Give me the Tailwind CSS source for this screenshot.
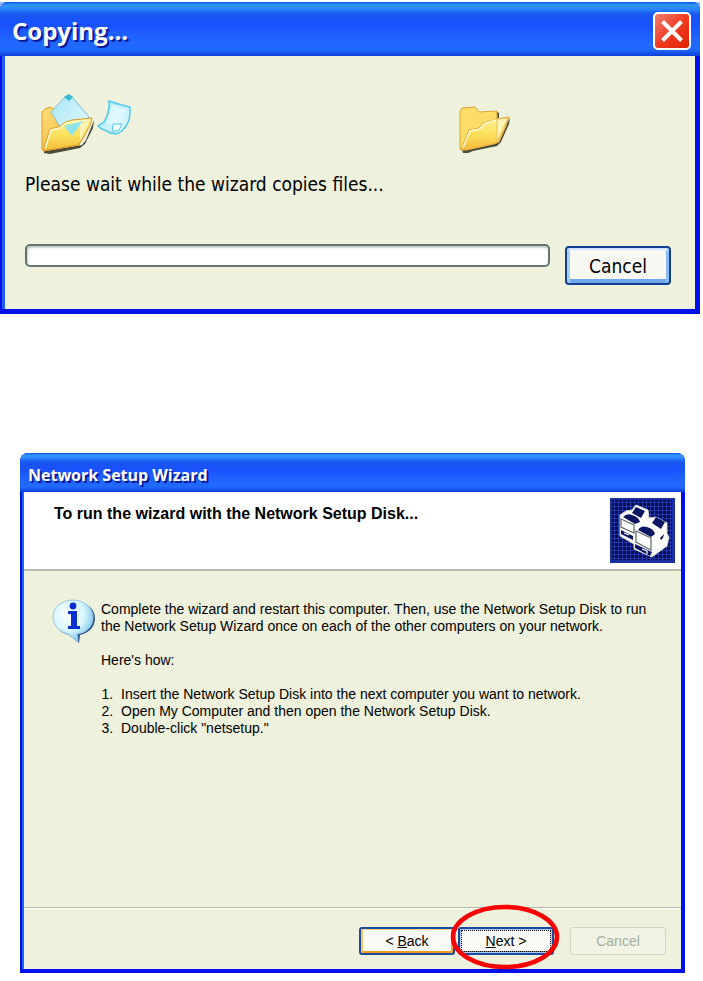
<!DOCTYPE html>
<html lang="en">
<head>
  <meta charset="UTF-8" />
  <title>Network Setup Wizard</title>
  <script src="https://cdn.jsdelivr.net/npm/@tailwindcss/browser@4"></script>
</head>
<body class="bg-white text-black min-h-screen pt-[2px]">

  <!-- Copying dialog -->
  <div class="bg-[#8fb6f2] mr-[3px]">
    <section class="rounded-t-lg bg-[#0010e8] border-b-[5px] border-[#0010e8] font-['DejaVu_Sans_Condensed','DejaVu_Sans',sans-serif]">
      <header class="h-[54px] rounded-t-lg flex items-center justify-between pl-3 pr-[9px] pt-1 bg-[linear-gradient(180deg,#0a4fe0_0px,#2f97ff_3px,#2a86fc_7px,#1757ee_12px,#1b50ff_22px,#2068ff_40px,#2068ff_48px,#0d3fd8_54px)]">
        <h1 class="text-white text-[24px] leading-7 font-bold font-['Open_Sans',sans-serif] [text-shadow:2px_2px_0_#0a1a9c]">Copying...</h1>
        <button type="button" aria-label="Close" class="size-[38px] rounded-[5px] border-2 border-white bg-linear-to-br from-[#f07a6c] via-[#f03a20] to-[#e02000] flex items-center justify-center">
          <svg class="size-[22px]" viewBox="0 0 22 22" fill="none" stroke="#fff" stroke-width="4"><path d="M1.5 1.5l19 19M20.5 1.5l-19 19" /></svg>
        </button>
      </header>

      <div class="mx-[5px] bg-[#eef1db] pl-5 pr-6 pt-9 pb-6 shadow-[-3px_0_0_#2060ff]">
        <div class="flex items-start pl-4 pr-[160px]">
          <svg class="w-[54px] h-[62px]" viewBox="0 0 54 62">
            <defs>
              <linearGradient id="back" x1="0" y1="0" x2="1" y2="1">
                <stop offset="0" stop-color="#fde07a" /><stop offset="1" stop-color="#eda92c" />
              </linearGradient>
              <linearGradient id="front" x1="0" y1="0" x2="0" y2="1">
                <stop offset="0" stop-color="#fff09c" /><stop offset=".5" stop-color="#fde25e" /><stop offset="1" stop-color="#f4b93a" />
              </linearGradient>
              <linearGradient id="sheet" x1="0" y1="0" x2="1" y2="1">
                <stop offset="0" stop-color="#a8e6f7" /><stop offset="1" stop-color="#e4fafe" />
              </linearGradient>
            </defs>
            <path d="M3 59l38-6 4-5 8-20-1 8-8 16-5 4-30 6-6-1z" fill="#4c4a3a" />
            <path d="M1 57V20l3-3 5-2 5 3 32 10-8 25-35 6z" fill="url(#back)" stroke="#e59a26" />
            <path d="M10 20L24 5l4-2 4 3 16 19-14 18-14-7z" fill="url(#sheet)" stroke="#7fb9de" />
            <path d="M23 5l5-3 4 3-4 4z" fill="#35bcd2" />
            <path d="M2 59l7-22 9-2 6-5 7-2 20-2-2 7-8 15-4 5z" fill="url(#front)" stroke="#d99a2a" />
            <path d="M4 57l6-19 9-2 6-5 24-3" fill="none" stroke="#fff8d0" stroke-width="1.5" />
            <path d="M23 34l19-5-11 15z" fill="#8de3ec" />
            <path d="M39 32v17l9-20z" fill="#fff6c8" opacity=".8" />
          </svg>
          <svg class="w-9 h-[39px] mt-1 ml-[2px]" viewBox="0 0 36 39">
            <path d="M12 5l6 2 7 2 8 2v6l-1 7-3 6-4 5-6 3-6-1-3-2-5-2-4-3 6-4 3-6 2-8z" fill="url(#sheet)" stroke="#4fc8ea" stroke-width="1.5" />
            <path d="M15 9l14 5-4 13-8 3-7-3z" fill="#dcf7fe" />
            <path d="M15 36l1-8 9 0-3 6z" fill="#f2fdff" stroke="#4fc8ea" />
          </svg>
          <svg class="w-[52px] h-[50px] mt-[13px] ml-auto" viewBox="0 0 52 50">
            <path d="M3 45l34-9 14-23-1 6-8 18-4 4-24 5-5 2H4z" fill="#4c4a3a" />
            <path d="M37 6l3 2v5h-4z" fill="#4c4a3a" />
            <path d="M1 44V6l2-3 13-1 4 5 18-1v20L4 45z" fill="#fcdd68" stroke="#d9a535" />
            <path d="M2 45l8-20 10-2 4-5 14-4 12-2-3 9-7 16-5 2-27 6z" fill="url(#front)" stroke="#dba83a" />
            <path d="M4 43l7-17 10-2 4-5 12-4" fill="none" stroke="#fff8d0" stroke-width="1.5" />
            <path d="M38 14v23l11-24z" fill="#fff3b6" stroke="#e5c05a" />
          </svg>
        </div>

        <p id="copy-text" class="mt-[17px] text-[19px] leading-6">Please wait while the wizard copies files...</p>

        <div class="mt-[48px] flex items-start gap-[15px]">
          <div role="progressbar" aria-labelledby="copy-text" aria-valuenow="0" class="grow h-[23px] rounded-[5px] border-2 border-[#66736f] bg-white shadow-[inset_1px_2px_2px_#c4cbc8]"></div>
          <button type="button" class="mt-[2px] w-[106px] h-[39px] rounded-[4px] border-2 border-[#123f94] bg-[#f8f8f2] text-[19px] leading-6 shadow-[inset_0_2px_0_#cfe2ff,inset_3px_0_0_#a9ccf8,inset_-3px_0_0_#8bbcf5,inset_0_-4px_0_#6fa8f0]">Cancel</button>
        </div>
      </div>
    </section>
  </div>

  <!-- Network Setup Wizard dialog -->
  <section class="mt-[139px] ml-5 mr-[18px] rounded-t-lg bg-[#0010e8] border-b-[4px] border-[#0010e8] font-['Liberation_Sans',Arial,sans-serif]">
    <header class="h-[39px] rounded-t-lg flex items-center pl-2 pt-1 bg-[linear-gradient(180deg,#0a4fe0_0px,#2f97ff_2px,#2a86fc_5px,#1757ee_9px,#1b50ff_16px,#2068ff_29px,#2068ff_34px,#0d3fd8_39px)]">
      <h1 class="text-white text-[16px] leading-6 font-bold font-['Open_Sans',sans-serif] [text-shadow:2px_2px_0_#0a1a9c]">Network Setup Wizard</h1>
    </header>

    <div class="mx-[4px] bg-[#eef1db] shadow-[-2px_0_0_#2060ff]">
      <div class="h-[79px] bg-white border-b-2 border-[#b9beaf] flex items-start justify-between pl-[30px] pr-[6px] pt-[6px]">
        <h2 class="mt-[6px] text-[16px] leading-[20px] font-bold">To run the wizard with the Network Setup Disk...</h2>
        <svg class="size-[65px]" viewBox="0 0 65 65">
          <defs>
            <pattern id="dots" width="4" height="4" patternUnits="userSpaceOnUse">
              <rect width="4" height="4" fill="#2038b4" /><rect width="3" height="3" x="1" y="1" fill="#080d3c" />
            </pattern>
          </defs>
          <rect width="65" height="65" fill="#1a2f9e" />
          <rect width="60" height="60" x="2" y="2" fill="url(#dots)" />
          <path d="M10 17l6-4 6-1 4-5 12 5 1 8 7-1 11 6v11l2 3-2 9-15 11-18-8v-5l-14-8z" fill="#fff" stroke="#d5d9d4" stroke-linejoin="round" />
          <g fill="#0c1562">
            <path d="M22 15l4-6 9 4-4 7zM42 25l4-6 9 5-4 7z" />
            <path d="M13 19q4-4 9-2 7 2 8 7l-5 2zM28 32q3-5 9-3 7 2 8 7l-4 3z" />
            <path d="M11 32l12 6v4l-12-6zM25 46l17 8-2 4-15-8z" />
            <path d="M50 40l4-4-1 4-2 2z" />
          </g>
          <g fill="none" stroke="#6a7070" stroke-width="1.3">
            <path d="M11 21l13 6v8l-13-6zM26 33l15 7v12l-15-8z" />
          </g>
          <g fill="none" stroke="#fff" stroke-width="1.2">
            <path d="M14 35l5 2M32 51l5 2v3" />
          </g>
        </svg>
      </div>

      <div class="h-[337px] flex items-start pl-7 pr-4 pt-[28px] border-b border-[#b3b9a2]">
        <svg class="w-[44px] h-[45px] shrink-0" viewBox="0 0 44 45">
          <defs>
            <radialGradient id="bubble" cx=".4" cy=".35" r=".7">
              <stop offset="0" stop-color="#fff" /><stop offset=".55" stop-color="#d6f6fe" /><stop offset="1" stop-color="#6cbdea" />
            </radialGradient>
          </defs>
          <path d="M22 2C10 2 3 9 3 19s6 15 14 17l10 8 1-8c9-2 15-8 15-17S34 2 22 2z" fill="#28508e" />
          <path d="M21 1C9 1 1 9 1 18s7 15 15 17l10 8-1-8c10-1 16-8 16-17S32 1 21 1z" fill="url(#bubble)" stroke="#9bc8e4" />
          <circle cx="21" cy="7" r="3.4" fill="#0a2fd0" />
          <path d="M16 12h9v15h3v3H16v-3h3V15h-3z" fill="#0a2fd0" />
        </svg>
        <div class="ml-[5px] text-[14px] leading-[17px]">
          <p class="mt-[2px]">Complete the wizard and restart this computer. Then, use the Network Setup Disk to run the Network Setup Wizard once on each of the other computers on your network.</p>
          <p class="mt-[17px]">Here's how:</p>
          <ol class="mt-[17px] pl-4 list-decimal">
            <li class="pl-1">Insert the Network Setup Disk into the next computer you want to network.</li>
            <li class="pl-1">Open My Computer and then open the Network Setup Disk.</li>
            <li class="pl-1">Double-click "netsetup."</li>
          </ol>
        </div>
      </div>

      <div class="h-[61px] border-t border-white flex items-start justify-end pr-[15px] pt-[18px] text-[14px] leading-5">
        <button type="button" class="w-[96px] h-[28px] rounded-[3px] border-2 border-[#1c4aa0] bg-[#fafaf6] shadow-[inset_0_1px_0_#fdd890,inset_2px_0_0_#fbc55c,inset_-2px_0_0_#f5a52c,inset_0_-2px_0_#f09a1c]">&lt; <u>B</u>ack</button>
        <div class="relative ml-[3px]">
          <button type="button" class="w-[96px] h-[28px] rounded-[3px] border-2 border-[#1c4aa0] bg-[#fafaf6] p-px shadow-[inset_0_0_0_1px_#a9ccf8,inset_0_-2px_0_#5b90e8]"><span class="flex h-full items-center justify-center border border-dotted border-black whitespace-pre"><u>N</u>ext &gt;</span></button>
          <svg class="absolute -left-[8px] -top-[23px] w-[110px] h-[66px] pointer-events-none" viewBox="0 0 110 66" fill="none"><ellipse cx="55" cy="33" rx="52" ry="30" stroke="#fb0000" stroke-width="4.5" /></svg>
        </div>
        <button type="button" disabled class="ml-4 w-[96px] h-[28px] rounded-[3px] border border-[#d0d6be] bg-[#f2f3e4] text-[#a5b09a]">Cancel</button>
      </div>
    </div>
  </section>

</body>
</html>
